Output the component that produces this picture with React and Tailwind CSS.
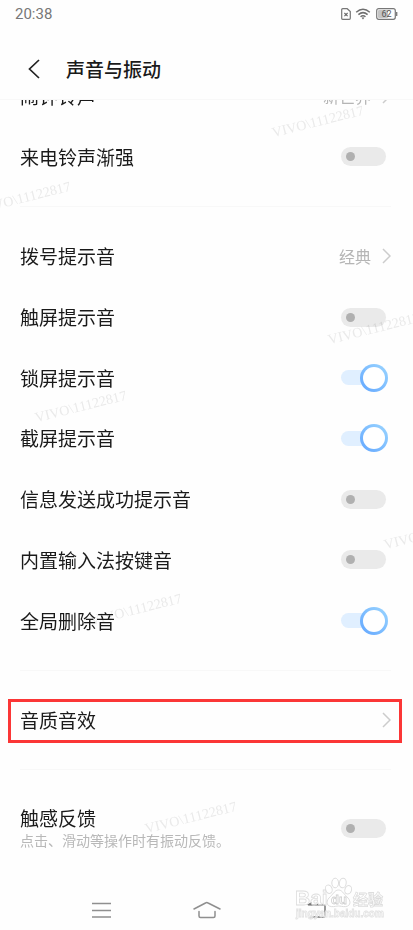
import React, { useState } from "react";

const watermarks = [
  { id: 1, place: "left-[271px] top-[112px]" },
  { id: 2, place: "left-[-22px] top-[188px]" },
  { id: 3, place: "left-[327px] top-[319px]" },
  { id: 4, place: "left-[34px] top-[397px]" },
  { id: 5, place: "left-[383px] top-[524px]" },
  { id: 6, place: "left-[89px] top-[600px]" },
  { id: 7, place: "left-[144px] top-[808px]" },
];

const soundSettings = [
  { id: "dial", label: "拨号提示音", value: "经典" },
  { id: "touch", label: "触屏提示音", on: false },
  { id: "lock", label: "锁屏提示音", on: true },
  { id: "screenshot", label: "截屏提示音", on: true },
  { id: "message", label: "信息发送成功提示音", on: false },
  { id: "keyboard", label: "内置输入法按键音", on: false },
  { id: "delete", label: "全局删除音", on: true },
];

const Chevron = () => (
  <svg className="h-4 w-[9px] shrink-0" viewBox="0 0 9 16" fill="none">
    <path d="M1 1 L8 8 L1 15" stroke="#cccccc" strokeWidth="1.5" />
  </svg>
);

const Switch = ({ id, defaultOn }) => {
  const [on, setOn] = useState(defaultOn);

  return (
    <span className="relative mr-[3px] flex h-7 w-[47px] shrink-0 items-center">
      <input
        id={id}
        type="checkbox"
        role="switch"
        checked={on}
        onChange={() => setOn(!on)}
        className="absolute inset-0 z-10 m-0 cursor-pointer opacity-0"
      />
      {on ? (
        <>
          <span className="h-[15px] w-10 rounded-full bg-[#e0efff]" />
          <span className="absolute right-0 size-7 rounded-full bg-linear-to-tr from-[#62a6ff] to-[#9bd5ff] p-[3px]">
            <span className="block size-full rounded-full bg-white" />
          </span>
        </>
      ) : (
        <span className="flex h-[19px] w-[45px] items-center rounded-full bg-[#eaeaea] pl-[5px]">
          <span className="size-[9px] rounded-full bg-[#b0b0b0]" />
        </span>
      )}
    </span>
  );
};

const SwitchRow = ({ id, label, hint, on }) => (
  <div className="flex items-center justify-between pr-[22px] pl-5">
    <label htmlFor={id} className="flex flex-col">
      <span className="text-[19px] leading-6">{label}</span>
      {hint && (
        <span className="text-sm leading-5 text-[#b8b8b8]">{hint}</span>
      )}
    </label>
    <Switch id={id} defaultOn={on} />
  </div>
);

const LinkRow = ({ label, value }) => (
  <button
    type="button"
    className="flex w-full items-center justify-between pr-[22px] pl-5 text-left"
  >
    <span className="text-[19px] leading-6">{label}</span>
    <span className="flex items-center gap-[11px] text-base text-[#b5b5b5]">
      {value}
      <Chevron />
    </span>
  </button>
);

const Divider = () => (
  <hr className="my-[19px] mr-[22px] ml-5 border-t border-[#f8f8f8]" />
);

const StatusBar = () => (
  <div className="flex h-7 items-center justify-between pr-[15px] pl-[15px]">
    <span className="font-[Roboto,sans-serif] text-[15px] leading-5 text-[#777777]">
      20:38
    </span>
    <div className="flex items-center gap-1">
      <svg className="h-3 w-[10px]" viewBox="0 0 10 12" fill="none">
        <path
          d="M1.7 0.7 H6.2 L9.3 3.6 V10.3 Q9.3 11.3 8.3 11.3 H1.7 Q0.7 11.3 0.7 10.3 V1.7 Q0.7 0.7 1.7 0.7 Z"
          stroke="#777777"
          strokeWidth="1.2"
        />
        <path d="M3.4 5 L6.6 8.2 M6.6 5 L3.4 8.2" stroke="#666666" strokeWidth="1.1" />
      </svg>
      <svg className="h-3 w-4" viewBox="0 0 16 12" fill="none">
        <g stroke="#6f6f6f" strokeWidth="1.5">
          <path d="M1.2 4.2 Q8 -1.8 14.8 4.2" />
          <path d="M3.4 6.6 Q8 2.6 12.6 6.6" />
          <path d="M5.5 8.8 Q8 6.7 10.5 8.8" />
        </g>
        <path d="M6.6 9.8 Q8 8.8 9.4 9.8 L8 11.4 Z" fill="#6f6f6f" />
      </svg>
      <svg className="ml-px h-3 w-[22px]" viewBox="0 0 22 12">
        <rect x="2" y="2" width="10" height="8" rx="1" fill="#c4c4c4" />
        <rect
          x="0.7"
          y="0.7"
          width="18.6"
          height="10.6"
          rx="2"
          fill="none"
          stroke="#777777"
          strokeWidth="1.2"
        />
        <path d="M20.7 4 V8" stroke="#777777" strokeWidth="1.3" />
        <text
          x="10.5"
          y="9"
          textAnchor="middle"
          fontFamily="Roboto, sans-serif"
          fontSize="9"
          fill="#555555"
        >
          62
        </text>
      </svg>
    </div>
  </div>
);

const NavBar = () => (
  <nav className="mt-auto flex h-10 items-center justify-between px-[87px]">
    <button type="button" aria-label="菜单">
      <svg className="h-5 w-7" viewBox="0 0 28 20" fill="none">
        <path
          d="M5 3.5 H24 M5 10.5 H24 M5 17 H24"
          stroke="#8f8f8f"
          strokeWidth="1.5"
        />
      </svg>
    </button>
    <button type="button" aria-label="主屏幕">
      <svg className="h-5 w-7" viewBox="0 0 28 20" fill="none">
        <g
          stroke="#8f8f8f"
          strokeWidth="1.5"
          strokeLinecap="round"
          strokeLinejoin="round"
        >
          <path d="M1 9 L12.5 3 Q13.8 2.2 15.1 3 L27 9" />
          <path d="M6 11.5 V16 Q6 17.5 7.5 17.5 H20.5 Q22 17.5 22 16 V11.5" />
        </g>
      </svg>
    </button>
    <button type="button" aria-label="返回">
      <svg className="h-5 w-7" viewBox="0 0 28 20" fill="none">
        <path
          d="M10 4.7 H25.5 Q27 4.7 27 6.2 V15.5 Q27 17 25.5 17 H12"
          stroke="#777777"
          strokeWidth="1.5"
        />
        <path d="M8.5 5 L14 1.8 V5.2 Z" fill="#777777" />
      </svg>
    </button>
  </nav>
);

const BaiduLogo = () => (
  <svg
    className="pointer-events-none absolute right-[26px] bottom-[6px] h-12 w-[94px]"
    viewBox="0 0 94 48"
    fill="#ffffff"
    fillOpacity="0.6"
    stroke="#dddddd"
    strokeWidth="0.8"
    fontFamily="'Liberation Sans', 'Noto Sans CJK SC', sans-serif"
    fontWeight="700"
  >
    <text x="2" y="29" fontSize="21">
      Bai
    </text>
    <g strokeWidth="1">
      <ellipse cx="35.8" cy="13.2" rx="3.3" ry="4.3" transform="rotate(-18 35.8 13.2)" />
      <ellipse cx="42.2" cy="7" rx="3.4" ry="4.8" />
      <ellipse cx="49.8" cy="7" rx="3.4" ry="4.8" transform="rotate(8 49.8 7)" />
      <ellipse cx="55.2" cy="13.8" rx="3.3" ry="4.3" transform="rotate(18 55.2 13.8)" />
      <path d="M45.5 14 C49 14 50.5 17.5 53.5 20.5 C58 24 58.5 30 52.5 30.6 C49.5 30.8 47.5 30 45.5 30 C43.5 30 41.5 30.8 38.5 30.6 C32.5 30 33 24 37.5 20.5 C40.5 17.5 42 14 45.5 14 Z" />
    </g>
    <text x="38" y="28" fontSize="13" stroke="#d0d0d0">
      du
    </text>
    <text x="60" y="29" fontSize="15" fontFamily="'Noto Sans CJK SC', sans-serif">
      经验
    </text>
    <text x="3" y="41" fontSize="10" stroke="#e2e2e2">
      jingyan.baidu.com
    </text>
  </svg>
);

const App = () => {
  return (
    <div className="relative flex min-h-svh flex-col overflow-hidden bg-[#fefefe] font-['Noto_Sans_CJK_SC',sans-serif] text-[#1a1a1a]">
      <header className="z-10 border-b border-[#f8f8f8] bg-[#fefefe]">
        <StatusBar />
        <div className="flex h-[71px] items-center gap-[26px] pt-[10px] pl-7">
          <button type="button" aria-label="返回">
            <svg className="h-5 w-3" viewBox="0 0 12 20" fill="none">
              <path d="M11 1 L1.5 10 L11 19" stroke="#222222" strokeWidth="1.7" />
            </svg>
          </button>
          <h1 className="text-[19px] leading-6 font-medium">声音与振动</h1>
        </div>
      </header>

      <main>
        {/* first row is scrolled halfway under the header */}
        <section className="-mt-[34px] grid min-h-[121px] auto-rows-fr">
          <LinkRow label="闹钟铃声" value="新世界" />
          <SwitchRow id="ring" label="来电铃声渐强" on={false} />
        </section>
        <Divider />
        <section className="grid min-h-[425px] auto-rows-fr">
          {soundSettings.map((item) =>
            item.value ? (
              <LinkRow key={item.id} label={item.label} value={item.value} />
            ) : (
              <SwitchRow
                key={item.id}
                id={item.id}
                label={item.label}
                on={item.on}
              />
            )
          )}
        </section>
        <Divider />
        <section className="relative grid min-h-[60px]">
          <LinkRow label="音质音效" />
          <span className="pointer-events-none absolute top-[9px] right-[11px] bottom-[7px] left-2 border-3 border-[#fb3636]" />
        </section>
        <Divider />
        <section className="grid min-h-[78px]">
          <SwitchRow
            id="haptic"
            label="触感反馈"
            hint="点击、滑动等操作时有振动反馈。"
            on={false}
          />
        </section>
      </main>

      <NavBar />

      <div className="pointer-events-none absolute inset-0 overflow-hidden mix-blend-multiply">
        {watermarks.map((mark) => (
          <span
            key={mark.id}
            className={`absolute -rotate-14 font-['Liberation_Serif',serif] text-sm leading-5 whitespace-nowrap text-[#ebebeb] ${mark.place}`}
          >
            VIVO\11122817
          </span>
        ))}
      </div>
      <BaiduLogo />
    </div>
  );
};

export default App;
